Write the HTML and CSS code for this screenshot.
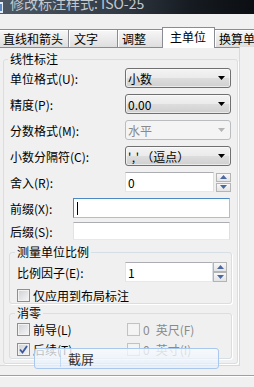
FILE: index.html
```html
<!DOCTYPE html>
<html>
<head>
<meta charset="utf-8">
<link rel="stylesheet" href="styles.css">
</head>
<body>

<div class="titlebar">
  <svg class="app-icon" width="4" height="14" viewBox="0 0 4 14"><rect x="0" y="2" width="3" height="11" fill="#e4edf7"/><rect x="0" y="4" width="2" height="7" fill="#5b87c2"/></svg>
  <span class="title">修改标注样式: ISO-25</span>
</div>

<div class="tabs">
  <div class="tab t1">直线和箭头</div>
  <div class="tab t2">文字</div>
  <div class="tab t3">调整</div>
  <div class="tab t4 active">主单位</div>
  <div class="tab t5">换算单位</div>
</div>

<div class="panel">
  <div class="group outer">
    <span class="group-title">线性标注</span>

    <div class="row first">
      <span class="lbl">单位格式(U):</span>
      <div class="combo"><span>小数</span><svg width="7" height="4" viewBox="0 0 7 4"><path d="M0 0H7L3.5 4Z" fill="#000"/></svg></div>
    </div>
    <div class="row">
      <span class="lbl">精度(P):</span>
      <div class="combo"><span>0.00</span><svg width="7" height="4" viewBox="0 0 7 4"><path d="M0 0H7L3.5 4Z" fill="#000"/></svg></div>
    </div>
    <div class="row">
      <span class="lbl">分数格式(M):</span>
      <div class="combo disabled"><span>水平</span><svg width="7" height="4" viewBox="0 0 7 4"><path d="M0 0H7L3.5 4Z" fill="#b4b4b4"/></svg></div>
    </div>
    <div class="row">
      <span class="lbl">小数分隔符(C):</span>
      <div class="combo"><span><span class="quote">','</span>（逗点）</span><svg width="7" height="4" viewBox="0 0 7 4"><path d="M0 0H7L3.5 4Z" fill="#000"/></svg></div>
    </div>
    <div class="row">
      <span class="lbl">舍入(R):</span>
      <div class="field round">0</div>
      <div class="spin">
        <div class="spin-btn"><svg width="7" height="4" viewBox="0 0 7 4"><path d="M0 4H7L3.5 0Z" fill="#4c67a1"/></svg></div>
        <div class="spin-btn"><svg width="7" height="4" viewBox="0 0 7 4"><path d="M0 0H7L3.5 4Z" fill="#4c67a1"/></svg></div>
      </div>
    </div>
    <div class="row">
      <span class="lbl short">前缀(X):</span>
      <div class="field wide focus"><span class="caret"></span></div>
    </div>
    <div class="row last">
      <span class="lbl short">后缀(S):</span>
      <div class="field wide"></div>
    </div>

    <div class="group inner scale">
      <span class="group-title">测量单位比例</span>
      <div class="row first-in">
        <span class="lbl scale-lbl">比例因子(E):</span>
        <div class="field factor">1</div>
        <div class="spin tight">
          <div class="spin-btn"><svg width="7" height="4" viewBox="0 0 7 4"><path d="M0 4H7L3.5 0Z" fill="#4c67a1"/></svg></div>
          <div class="spin-btn"><svg width="7" height="4" viewBox="0 0 7 4"><path d="M0 0H7L3.5 4Z" fill="#4c67a1"/></svg></div>
        </div>
      </div>
      <div class="row check">
        <span class="box"></span><span>仅应用到布局标注</span>
      </div>
    </div>

    <div class="group inner zero">
      <span class="group-title">消零</span>
      <div class="row check first-check">
        <div class="opt"><span class="box"></span><span>前导(L)</span></div>
        <div class="opt off"><span class="box"></span><span>0</span><span class="unit">英尺(F)</span></div>
      </div>
      <div class="row check">
        <div class="opt"><span class="box checked"><svg width="11" height="11" viewBox="0 0 11 11"><path d="M2 5.5L4.5 8.5L9 2" fill="none" stroke="#3a5a9e" stroke-width="1.8"/></svg></span><span>后续(T)</span></div>
        <div class="opt off"><span class="box"></span><span>0</span><span class="unit">英寸(I)</span></div>
      </div>
    </div>
  </div>
</div>

<div class="footer"></div>

<div class="shot-btn">
  <span class="shot-side"></span>
  <span class="shot-text">截屏</span>
</div>

</body>
</html>
```

FILE: styles.css
```css
body {
    margin: 0;
    width: 254px;
    height: 387px;
    overflow: hidden;
    position: relative;
    background: #f0f0f0;
    font-family: "Noto Sans CJK SC", "Noto Sans", sans-serif;
    font-size: 12px;
    color: #000;
}

/* window caption, mostly cut off at the top */
.titlebar {
    height: 14px;
    display: flex;
    align-items: flex-end;
    overflow: hidden;
    background: linear-gradient(90deg, #4d5864 0%, #333c46 45%, #161b21 75%, #0b0e12 100%);
}
.app-icon {
    flex: none;
    align-self: flex-start;
}
.title {
    margin-left: 6px;
    font-size: 14px;
    line-height: 22px;
    color: #c3c9cf;
    white-space: nowrap;
}

/* tab strip */
.tabs {
    display: flex;
    align-items: flex-end;
    height: 20px;
    margin-top: 13px;
}
.tab {
    flex: none;
    box-sizing: border-box;
    height: 18px;
    line-height: 17px;
    border: 1px solid #898c95;
    border-bottom: none;
    border-right: none;
    background: linear-gradient(#f7f7f7, #ebebeb 50%, #dedede);
    box-shadow: inset 1px 1px 0 #fff;
    white-space: nowrap;
    overflow: hidden;
}
.t1 { width: 70px; margin-left: -2px; padding-left: 4px; }
.t2 { width: 49px; padding-left: 5px; }
.t3 { width: 46px; padding-left: 4px; }
.t4 {
    width: 53px;
    margin-left: -1px;
    padding-left: 7px;
    height: 21px;
    margin-bottom: -1px;
    border-right: 1px solid #898c95;
}
.t5 {
    width: 42px;
    margin-left: -1px;
    padding-left: 4px;
    border-right: 1px solid #898c95;
}
.tab.active {
    background: #fff;
    box-shadow: none;
    z-index: 1;
}

.panel {
    width: 240px;
    height: 319px;
    box-sizing: border-box;
    border-top: 1px solid #898c95;
    border-right: 1px solid #d9d9d9;
    border-bottom: 1px solid #d9d9d9;
    overflow: hidden;
}

/* group boxes */
.group {
    display: flex;
    flex-direction: column;
    box-sizing: border-box;
    border: 1px solid #d5dfe5;
    border-radius: 3px;
    box-shadow: 1px 1px 0 #fff;
}
.group-title {
    align-self: flex-start;
    margin: -8px 0 0 -2px;
    padding: 0 2px;
    line-height: 14px;
    background: #f0f0f0;
    white-space: nowrap;
}
.outer {
    width: 235px;
    margin: 11px 0 0 3px;
    padding: 0 5px 4px 6px;
}
.inner {
    width: 223px;
    margin-left: -1px;
    padding-left: 7px;
}
.scale {
    margin-top: 12px;
    padding-bottom: 1px;
}
.zero {
    margin-top: 9px;
    padding-bottom: 2px;
}

/* rows */
.row {
    display: flex;
    align-items: center;
    height: 20px;
    margin-top: 6px;
}
.row.first { margin-top: 2px; }
.row.last { margin-top: 4px; height: 18px; }
.row.first-in { margin-top: 3px; }
.row.check { height: 14px; }
.row.first-check { margin-top: 2px; }
.lbl {
    flex: none;
    width: 115px;
    white-space: nowrap;
}
.lbl.short { width: 63px; }
.lbl.scale-lbl { width: 108px; }

/* drop-down lists */
.combo {
    flex: none;
    width: 106px;
    height: 20px;
    box-sizing: border-box;
    display: flex;
    align-items: center;
    justify-content: space-between;
    padding: 0 5px 0 2px;
    border: 1px solid #707070;
    border-radius: 3px;
    background: linear-gradient(#f3f3f3, #ebebeb 48%, #dddddd 52%, #d0d0d0);
    box-shadow: inset 0 0 0 1px rgba(255, 255, 255, .55);
    white-space: nowrap;
}
.combo.disabled {
    border-color: #b9bdc0;
    background: #f4f4f4;
    color: #8a8a8a;
    box-shadow: none;
}
.quote { letter-spacing: 2px; }

/* edit boxes */
.field {
    flex: none;
    box-sizing: border-box;
    height: 20px;
    display: flex;
    align-items: center;
    padding-left: 2px;
    border: 1px solid;
    border-color: #abadb3 #dbdfe6 #e3e9ef #e2e3ea;
    background: #fff;
}
.field.round { width: 89px; }
.field.wide { width: 157px; }
.row.last .field { height: 18px; }
.field.factor { width: 88px; }
.field.focus { border-color: #4a8ac4 #9fc3e6 #9fc3e6 #4a8ac4; }
.caret {
    width: 1px;
    height: 13px;
    margin-left: 1px;
    background: #000;
}

.spin {
    flex: none;
    display: flex;
    flex-direction: column;
    gap: 1px;
    margin-left: 2px;
}
.spin.tight { margin-left: 0; gap: 0; }
.spin-btn {
    box-sizing: border-box;
    width: 15px;
    height: 9px;
    display: flex;
    align-items: center;
    justify-content: center;
    border: 1px solid #b4b4b4;
    background: linear-gradient(#f8f8f8, #e3e3e3);
}
.spin.tight .spin-btn { width: 14px; height: 10px; }

/* check boxes */
.box {
    flex: none;
    box-sizing: border-box;
    width: 13px;
    height: 13px;
    margin-right: 3px;
    display: flex;
    align-items: center;
    justify-content: center;
    border: 1px solid #8e8f8f;
    background: linear-gradient(135deg, #cdd0d5, #f7f7f7);
    box-shadow: inset 0 0 0 1px #f2f2f2;
}
.opt {
    display: flex;
    align-items: center;
    width: 110px;
    flex: none;
    white-space: nowrap;
}
.opt.off { color: #8a8a8a; }
.opt.off .box {
    border-color: #c2c2c2;
    background: #f4f4f4;
}
.unit { margin-left: 6px; }

.footer {
    margin-top: 9px;
    height: 12px;
    border-top: 1px solid #a0a0a0;
    box-shadow: inset 0 1px 0 #fff;
}

/* translucent screenshot button floating over the dialog */
.shot-btn {
    position: absolute;
    left: 34px;
    top: 348px;
    width: 185px;
    height: 21px;
    box-sizing: border-box;
    display: flex;
    align-items: center;
    border: 1px solid #aac8ee;
    border-radius: 3px;
    background: linear-gradient(rgba(248, 251, 255, .8), rgba(228, 239, 252, .65));
}
.shot-side {
    width: 25px;
    height: 17px;
    border-right: 1px solid rgba(170, 200, 238, .6);
}
.shot-text {
    margin-left: 7px;
    font-size: 13px;
    color: #333;
}
```
